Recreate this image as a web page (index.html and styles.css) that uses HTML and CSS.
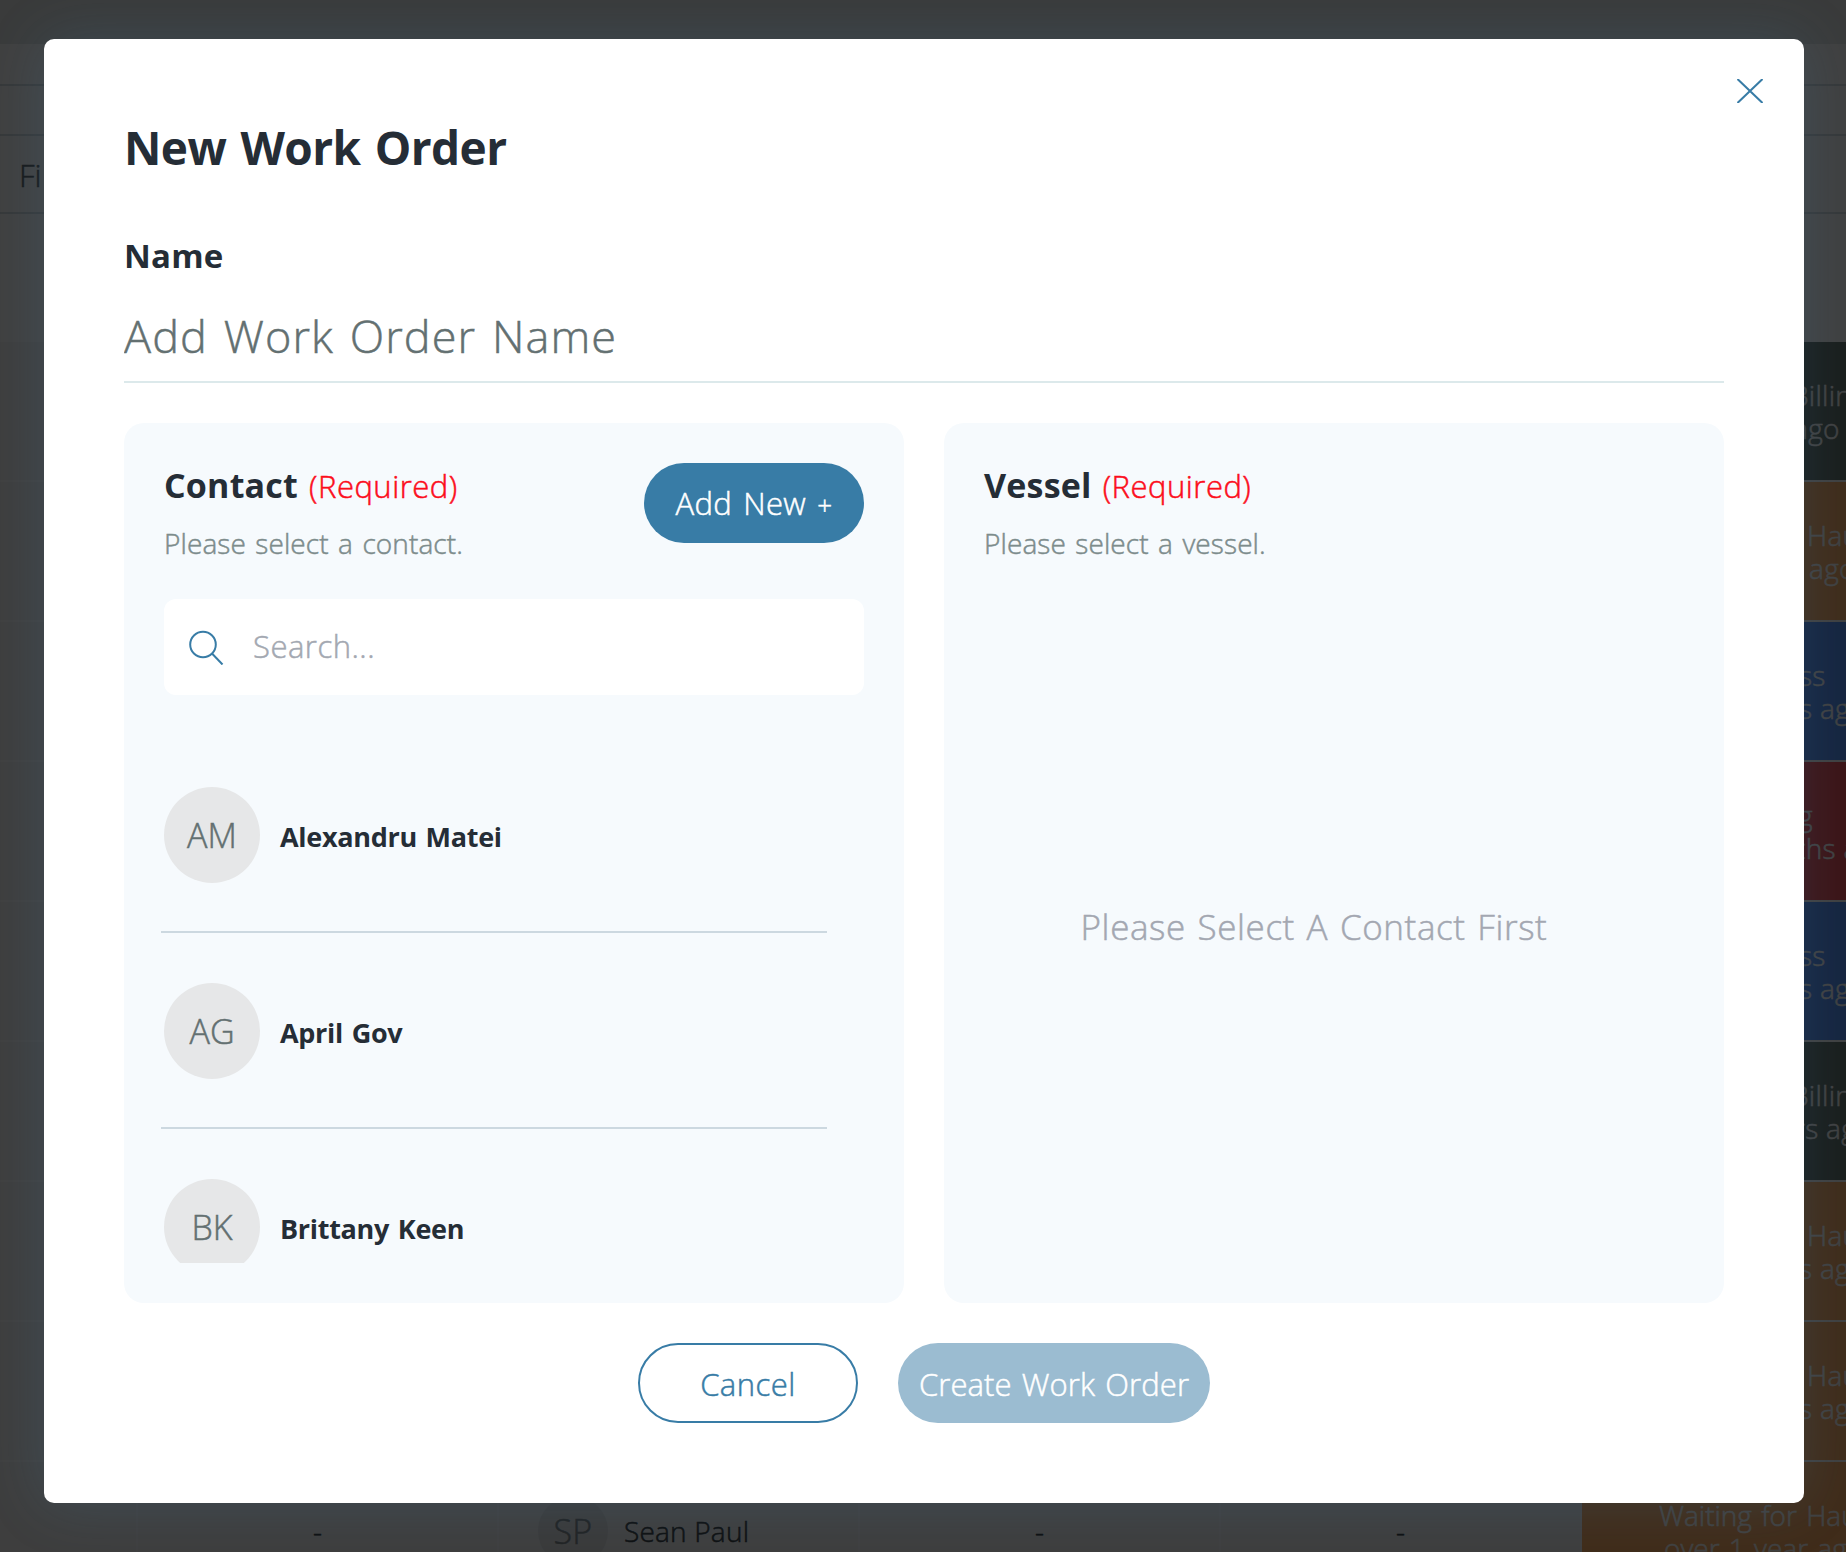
FILE: index.html
```html
<!DOCTYPE html>
<html lang="en">
<head>
    <meta charset="UTF-8">
    <meta name="viewport" content="width=device-width, initial-scale=1.0">
    <title>New Work Order</title>
    <link rel="stylesheet" href="styles.css">
</head>
<body>
    <div class="board">
        <div class="topbar"></div>
        <div class="tabs"></div>
        <div class="tabs second"></div>
        <div class="filters">Fi</div>
        <div class="table-head"></div>

        <div class="row"><div class="status billing"><span>Billin</span><span class="when-a">ago</span></div></div>
        <div class="row"><div class="status hauling"><span>Hau</span><span class="when-b">ago</span></div></div>
        <div class="row"><div class="status progress"><span>ss</span><span>s ago</span></div></div>
        <div class="row"><div class="status waiting"><span>g</span><span class="when-c">ths ago</span></div></div>
        <div class="row"><div class="status progress"><span>ss</span><span>s ago</span></div></div>
        <div class="row"><div class="status billing"><span>Billin</span><span class="when-d">rs ago</span></div></div>
        <div class="row"><div class="status hauling"><span>Hau</span><span class="when-e">s ago</span></div></div>
        <div class="row"><div class="status hauling"><span>Hau</span><span class="when-e">s ago</span></div></div>
        <div class="row last">
            <div class="cell first"></div>
            <div class="cell">-</div>
            <div class="cell person"><span class="small-avatar">SP</span>Sean Paul</div>
            <div class="cell">-</div>
            <div class="cell">-</div>
            <div class="status full"><span>Waiting for Hau</span><span>over 1 year ago</span></div>
        </div>
    </div>

    <div class="overlay">
        <div class="modal">
            <button class="close" aria-label="Close">
                <svg width="26" height="24" viewBox="0 0 26 24"><path d="M0.5 0 L25.5 24 M25.5 0 L0.5 24" fill="none" stroke="#387ca6" stroke-width="2"/></svg>
            </button>

            <h1>New Work Order</h1>
            <label class="name-label" for="orderName">Name</label>
            <input class="name-input" type="text" id="orderName" placeholder="Add Work Order Name">

            <div class="panels">
                <div class="panel">
                    <div class="panel-head">
                        <div>
                            <h2>Contact <span class="required">(Required)</span></h2>
                            <p class="hint">Please select a contact.</p>
                        </div>
                        <button class="btn add">Add New <span class="plus">+</span></button>
                    </div>
                    <div class="search">
                        <svg width="35" height="35" viewBox="0 0 35 35"><g fill="none" stroke="#387ca6" stroke-width="2"><circle cx="14" cy="14.5" r="12.8"/><path d="M23 23.5 L33.5 34.5"/></g></svg>
                        <input type="text" placeholder="Search...">
                    </div>
                    <div class="contacts">
                        <div class="contact"><span class="avatar">AM</span><span class="contact-name">Alexandru Matei</span></div>
                        <div class="contact"><span class="avatar">AG</span><span class="contact-name">April Gov</span></div>
                        <div class="contact"><span class="avatar">BK</span><span class="contact-name">Brittany Keen</span></div>
                    </div>
                </div>
                <div class="panel">
                    <h2>Vessel <span class="required">(Required)</span></h2>
                    <p class="hint">Please select a vessel.</p>
                    <p class="empty">Please Select A Contact First</p>
                </div>
            </div>

            <div class="actions">
                <button class="btn cancel">Cancel</button>
                <button class="btn create" disabled>Create Work Order</button>
            </div>
        </div>
    </div>
</body>
</html>
```
FILE: styles.css
```css
:root {
    --primary-color: #387ca6;
    --text-color: #252d36;
    --muted-color: #637071;
    --panel-bg: #f6fafd;
}

* {
    box-sizing: border-box;
}

body {
    margin: 0;
    height: 1552px;
    overflow: hidden;
    font-family: "Open Sans", "Noto Sans", sans-serif;
    font-weight: 300;
    color: var(--text-color);
    -webkit-text-stroke: 0.5px;
}

h1, h2, p {
    margin: 0;
}

input, button {
    font: inherit;
    border: none;
    outline: none;
    padding: 0;
    background: none;
}

/* Work order board behind the dialog */
.board {
    height: 1552px;
    overflow: hidden;
    background-color: #fff;
}

.topbar {
    height: 44px;
    background-color: #e6ecea;
}

.tabs {
    height: 42px;
    border-bottom: 2px solid #d8e0e2;
}

.tabs.second {
    height: 50px;
}

.filters {
    height: 78px;
    padding: 19px 19px;
    border-bottom: 2px solid #d8e0e2;
    font-size: 31px;
    line-height: 40px;
    color: #5c6468;
}

.table-head {
    height: 128px;
}

.row {
    display: flex;
    height: 140px;
    border-bottom: 2px solid #fff;
    background-color: #f5f7f8;
}

.cell {
    display: flex;
    justify-content: center;
    align-items: center;
    width: 361px;
    border-right: 2px solid #fafcff;
    font-size: 28px;
    color: #3c4448;
}

.cell.first {
    width: 138px;
}

.person {
    gap: 16px;
    justify-content: flex-start;
    padding-left: 39px;
    letter-spacing: 0.2px;
}

.small-avatar {
    display: flex;
    justify-content: center;
    align-items: center;
    width: 70px;
    height: 70px;
    border-radius: 50%;
    background-color: #e6e6e8;
    font-size: 34px;
    color: #858d90;
}

.status {
    display: flex;
    flex-direction: column;
    justify-content: center;
    width: 264px;
    margin-left: 1582px;
    padding-top: 2px;
    padding-left: 217px;
    overflow: hidden;
    font-size: 28px;
    line-height: 33px;
    letter-spacing: 0.3px;
    white-space: nowrap;
    color: #fff;
}

.status.full {
    margin-left: 0;
    padding-left: 77px;
    letter-spacing: 0;
    word-spacing: 2px;
}

.status.full span:last-child {
    margin-left: 5px;
}

.billing {
    background-color: #68786f;
    padding-left: 209px;
}

.hauling, .status.full {
    background-color: #ffb068;
}

.hauling {
    padding-left: 225px;
}

.progress {
    background-color: #5894fc;
}

.waiting {
    background-color: #f05058;
    padding-left: 216px;
}

.when-a { margin-left: 2px; }
.when-b { margin-left: 2px; }
.when-c { margin-left: -2px; }
.when-d { margin-left: 3px; }
.when-e { margin-left: -8px; }

/* Dialog */
.overlay {
    position: absolute;
    inset: 0;
    padding: 39px 42px 49px 44px;
    background-color: rgba(0, 0, 0, 0.75);
}

.modal {
    position: relative;
    height: 1464px;
    padding: 80px;
    border-radius: 10px;
    background-color: #fff;
    box-shadow: 0 0 60px rgba(80, 150, 200, 0.18);
}

.close {
    position: absolute;
    top: 40px;
    right: 41px;
    width: 26px;
    height: 24px;
}

.close svg {
    display: block;
}

h1 {
    font-size: 46px;
    line-height: 56px;
    font-weight: 700;
    letter-spacing: -0.6px;
    word-spacing: 3px;
    -webkit-text-stroke: 0;
}

.name-label {
    display: block;
    margin-top: 61px;
    font-size: 33px;
    line-height: 40px;
    font-weight: 700;
    letter-spacing: 0.2px;
    -webkit-text-stroke: 0;
}

.name-input {
    display: block;
    width: 100%;
    height: 77px;
    margin-top: 30px;
    padding-bottom: 17px;
    border-bottom: 2px solid #dce9eb;
    font-size: 45px;
    letter-spacing: 1.1px;
    word-spacing: 3px;
}

.name-input::placeholder {
    color: var(--muted-color);
    opacity: 1;
}

.panels {
    display: grid;
    grid-template-columns: 1fr 1fr;
    gap: 40px;
    margin-top: 40px;
}

.panel {
    height: 880px;
    padding: 40px;
    border-radius: 20px;
    background-color: var(--panel-bg);
}

.panel-head {
    display: flex;
    justify-content: space-between;
    align-items: flex-start;
    height: 98px;
}

h2 {
    height: 42px;
    padding-top: 2px;
    font-size: 34px;
    line-height: 40px;
    font-weight: 700;
    letter-spacing: 0.2px;
    word-spacing: 2px;
    -webkit-text-stroke: 0;
}

.required {
    font-size: 31px;
    font-weight: 300;
    letter-spacing: 0.5px;
    color: #fc0d1b;
    -webkit-text-stroke: 0.5px;
}

.hint {
    margin-top: 20px;
    font-size: 28px;
    line-height: 36px;
    letter-spacing: 0.1px;
    word-spacing: 2px;
    color: #7d8c8c;
}

.btn {
    height: 80px;
    padding-top: 1px;
    border-radius: 40px;
    font-size: 31px;
    line-height: 40px;
    white-space: nowrap;
}

.add {
    width: 220px;
    background-color: var(--primary-color);
    color: #fff;
    letter-spacing: 0.3px;
    word-spacing: 3px;
}

.plus {
    font-size: 26px;
}

.search {
    display: flex;
    align-items: center;
    gap: 29px;
    height: 96px;
    margin-top: 38px;
    padding: 0 25px;
    border-radius: 12px;
    background-color: #fff;
}

.search input {
    flex: 1;
    padding-bottom: 2px;
    font-size: 31px;
    letter-spacing: 0.5px;
}

.search input::placeholder {
    color: #a3a8b1;
    opacity: 1;
}

.contacts {
    width: 666px;
    height: 526px;
    margin: 42px 0 0 -3px;
    overflow: hidden;
}

.contact {
    display: flex;
    align-items: center;
    gap: 20px;
    padding: 50px 0 48px 3px;
    border-bottom: 2px solid #ccd8e0;
}

.avatar {
    display: flex;
    justify-content: center;
    align-items: center;
    width: 96px;
    height: 96px;
    border-radius: 50%;
    background-color: #e6e7e8;
    font-size: 34px;
    color: var(--muted-color);
}

.contact-name {
    padding-top: 2px;
    font-size: 27px;
    font-weight: 700;
    letter-spacing: -0.3px;
    word-spacing: 2px;
    -webkit-text-stroke: 0;
}

.empty {
    margin: 344px 40px 0 0;
    font-size: 35px;
    line-height: 44px;
    letter-spacing: 0.6px;
    word-spacing: 2px;
    text-align: center;
    color: #a3a7b1;
}

.actions {
    display: flex;
    justify-content: center;
    gap: 40px;
    margin-top: 40px;
}

.cancel {
    width: 220px;
    border: 2px solid var(--primary-color);
    color: var(--primary-color);
    letter-spacing: 0.5px;
}

.create {
    width: 312px;
    background-color: #9bbcd1;
    color: #fff;
    letter-spacing: 0.1px;
    word-spacing: 2px;
}
```
